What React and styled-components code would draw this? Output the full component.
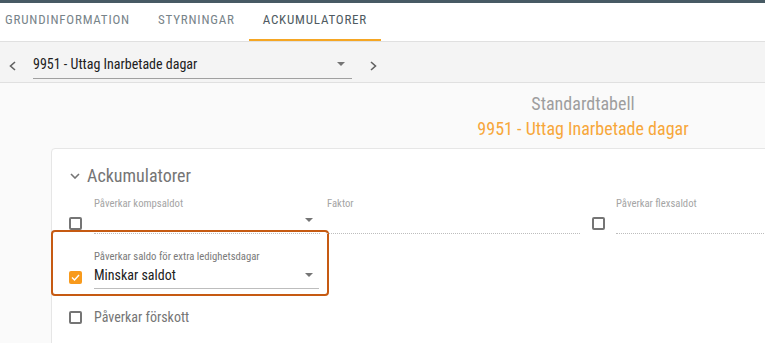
import React from 'react';
import styled, { createGlobalStyle } from 'styled-components';

const GlobalStyle = createGlobalStyle`
    body {
        margin: 0;
        background: #fafafa;
        font-family: 'Roboto Condensed', Roboto, sans-serif;
        overflow: hidden;
    }
`;

const tabs = ['Grundinformation', 'Styrningar', 'Ackumulatorer'];

const Chevron = ({ dir = 'left', color = '#616161' }) => {
    const points = {
        left: '6,1 1.5,5 6,9',
        right: '1,1 5.5,5 1,9',
        down: '1,1 5,5 9,1',
    }[dir];
    const w = dir === 'down' ? 10 : 7;
    const h = dir === 'down' ? 6 : 10;
    return (
        <svg width={w} height={h} viewBox={`0 0 ${w} ${h}`} style={{ display: 'block' }}>
            <polyline points={points} fill="none" stroke={color} strokeWidth="1.6" />
        </svg>
    );
};

const Caret = () => (
    <svg width="8" height="4" viewBox="0 0 8 4" style={{ display: 'block' }}>
        <polygon points="0,0 8,0 4,4" fill="#757575" />
    </svg>
);

const App = () => {
    return (
        <>
            <GlobalStyle />
            <TopStrip />
            <TabBar>
                <TabList>
                    {tabs.map((t, i) => (
                        <Tab key={t} active={i === tabs.length - 1}>
                            {t}
                        </Tab>
                    ))}
                </TabList>
            </TabBar>
            <Toolbar>
                <NavButton>
                    <Chevron dir="left" />
                </NavButton>
                <TableSelect>
                    <span>9951 - Uttag Inarbetade dagar</span>
                    <Caret />
                </TableSelect>
                <NavButton>
                    <Chevron dir="right" />
                </NavButton>
            </Toolbar>
            <Main>
                <Header>
                    <Subtitle>Standardtabell</Subtitle>
                    <Title>9951 - Uttag Inarbetade dagar</Title>
                </Header>
                <Card>
                    <SectionHeading>
                        <Chevron dir="down" color="#757575" />
                        Ackumulatorer
                    </SectionHeading>
                    <FieldRow>
                        <Checkbox />
                        <Field width={226}>
                            <Label>Påverkar kompsaldot</Label>
                            <Input>
                                <span />
                                <Caret />
                            </Input>
                        </Field>
                        <Field width={253}>
                            <Label>Faktor</Label>
                            <Input />
                        </Field>
                        <Checkbox />
                        <Field width={300}>
                            <Label>Påverkar flexsaldot</Label>
                            <Input />
                        </Field>
                    </FieldRow>
                    <Highlight>
                        <Checkbox checked>
                            <svg width="9" height="7" viewBox="0 0 9 7">
                                <polyline points="1,3.5 3.5,6 8,1" fill="none" stroke="#fff" strokeWidth="1.4" />
                            </svg>
                        </Checkbox>
                        <Field grow>
                            <Label dark>Påverkar saldo för extra ledighetsdagar</Label>
                            <Value>
                                <span>Minskar saldot</span>
                                <Caret />
                            </Value>
                        </Field>
                    </Highlight>
                    <CheckRow>
                        <Checkbox />
                        Påverkar förskott
                    </CheckRow>
                </Card>
            </Main>
        </>
    );
};

export default App;

const TopStrip = styled.div`
    height: 3px;
    background: #475a64;
`;

const TabBar = styled.div`
    height: 38px;
    background: white;
    border-bottom: 1px solid #e0e0e0;
    overflow: hidden;
`;

const TabList = styled.div`
    display: flex;
    height: 100%;
    margin-left: -9px;
`;

const Tab = styled.div`
    display: flex;
    align-items: center;
    padding: 0 14px 3px;
    font-size: 13px;
    letter-spacing: 0.8px;
    text-transform: uppercase;
    color: ${({ active }) => (active ? '#4f5b62' : '#78848a')};
    border-bottom: 2px solid ${({ active }) => (active ? '#f5a623' : 'transparent')};
    box-sizing: border-box;
`;

const Toolbar = styled.div`
    height: 41px;
    box-sizing: border-box;
    padding: 8px 0 0 9px;
    display: flex;
    align-items: center;
    background: #f4f4f4;
    border-bottom: 1px solid #e0e0e0;
`;

const NavButton = styled.div`
    display: flex;
    align-items: center;
    justify-content: center;
    width: 7px;
    &:last-child {
        margin-left: 18px;
    }
`;

const TableSelect = styled.div`
    width: 319px;
    margin-left: 17px;
    display: flex;
    align-items: center;
    justify-content: space-between;
    padding: 0 7px 3px 0;
    box-sizing: border-box;
    height: 25px;
    font-size: 14px;
    color: #212121;
    border-bottom: 1px solid #a0a0a0;
`;

const Main = styled.div`
    width: 1064px;
    margin-left: 51px;
    padding-top: 9px;
`;

const Header = styled.div`
    display: flex;
    flex-direction: column;
    align-items: center;
`;

const Subtitle = styled.div`
    font-size: 18px;
    line-height: 24px;
    color: #9e9e9e;
`;

const Title = styled.div`
    font-size: 18px;
    line-height: 26px;
    color: #f7a73a;
`;

const Card = styled.div`
    margin-top: 6px;
    height: 300px;
    background: white;
    border: 1px solid #e6e6e6;
    border-radius: 4px;
    padding: 15px 0 0 17px;
`;

const SectionHeading = styled.div`
    display: flex;
    align-items: center;
    gap: 7px;
    padding-left: 1px;
    font-size: 18px;
    line-height: 24px;
    color: #757575;
`;

const FieldRow = styled.div`
    display: flex;
    align-items: flex-end;
    margin-top: 9px;
    & > div:nth-child(2) {
        margin-left: 12px;
    }
    & > div:nth-child(3) {
        margin-left: 7px;
    }
    & > div:nth-child(4) {
        margin-left: 12px;
    }
    & > div:nth-child(5) {
        margin-left: 11px;
    }
`;

const Checkbox = styled.div`
    flex: none;
    width: 13px;
    height: 13px;
    box-sizing: border-box;
    border-radius: 2px;
    border: ${({ checked }) => (checked ? 'none' : '2px solid #757575')};
    background: ${({ checked }) => (checked ? '#f89a1c' : 'transparent')};
    display: flex;
    align-items: center;
    justify-content: center;
    margin-bottom: 4px;
`;

const Field = styled.div`
    display: flex;
    flex-direction: column;
    width: ${({ width }) => (width ? `${width}px` : 'auto')};
    flex: ${({ grow }) => (grow ? 1 : 'none')};
    margin-left: ${({ grow }) => (grow ? '12px' : 0)};
`;

const Label = styled.div`
    font-size: 10.7px;
    line-height: 13px;
    color: ${({ dark }) => (dark ? '#7a7a7a' : '#a5a5a5')};
`;

const Input = styled.div`
    height: 24px;
    box-sizing: border-box;
    display: flex;
    align-items: center;
    justify-content: space-between;
    padding: 0 7px 4px 0;
    border-bottom: 1px dotted #bdbdbd;
`;

const Highlight = styled.div`
    display: flex;
    align-items: flex-end;
    width: 278px;
    box-sizing: border-box;
    margin: -4px 0 0 -18px;
    padding: 18px 8px 5px 16px;
    border: 2px solid #c65a12;
    border-radius: 4px;
    & > div:first-child {
        margin-bottom: 5px;
    }
    ${Label} {
        line-height: 14px;
    }
`;

const Value = styled.div`
    height: 25px;
    box-sizing: border-box;
    display: flex;
    align-items: center;
    justify-content: space-between;
    padding: 1px 6px 4px 0;
    font-size: 14px;
    color: #212121;
    border-bottom: 1px solid #bdbdbd;
`;

const CheckRow = styled.div`
    display: flex;
    align-items: center;
    gap: 12px;
    margin-top: 11px;
    font-size: 14px;
    line-height: 20px;
    color: #757575;
    & > div {
        margin-bottom: 0;
    }
`;
